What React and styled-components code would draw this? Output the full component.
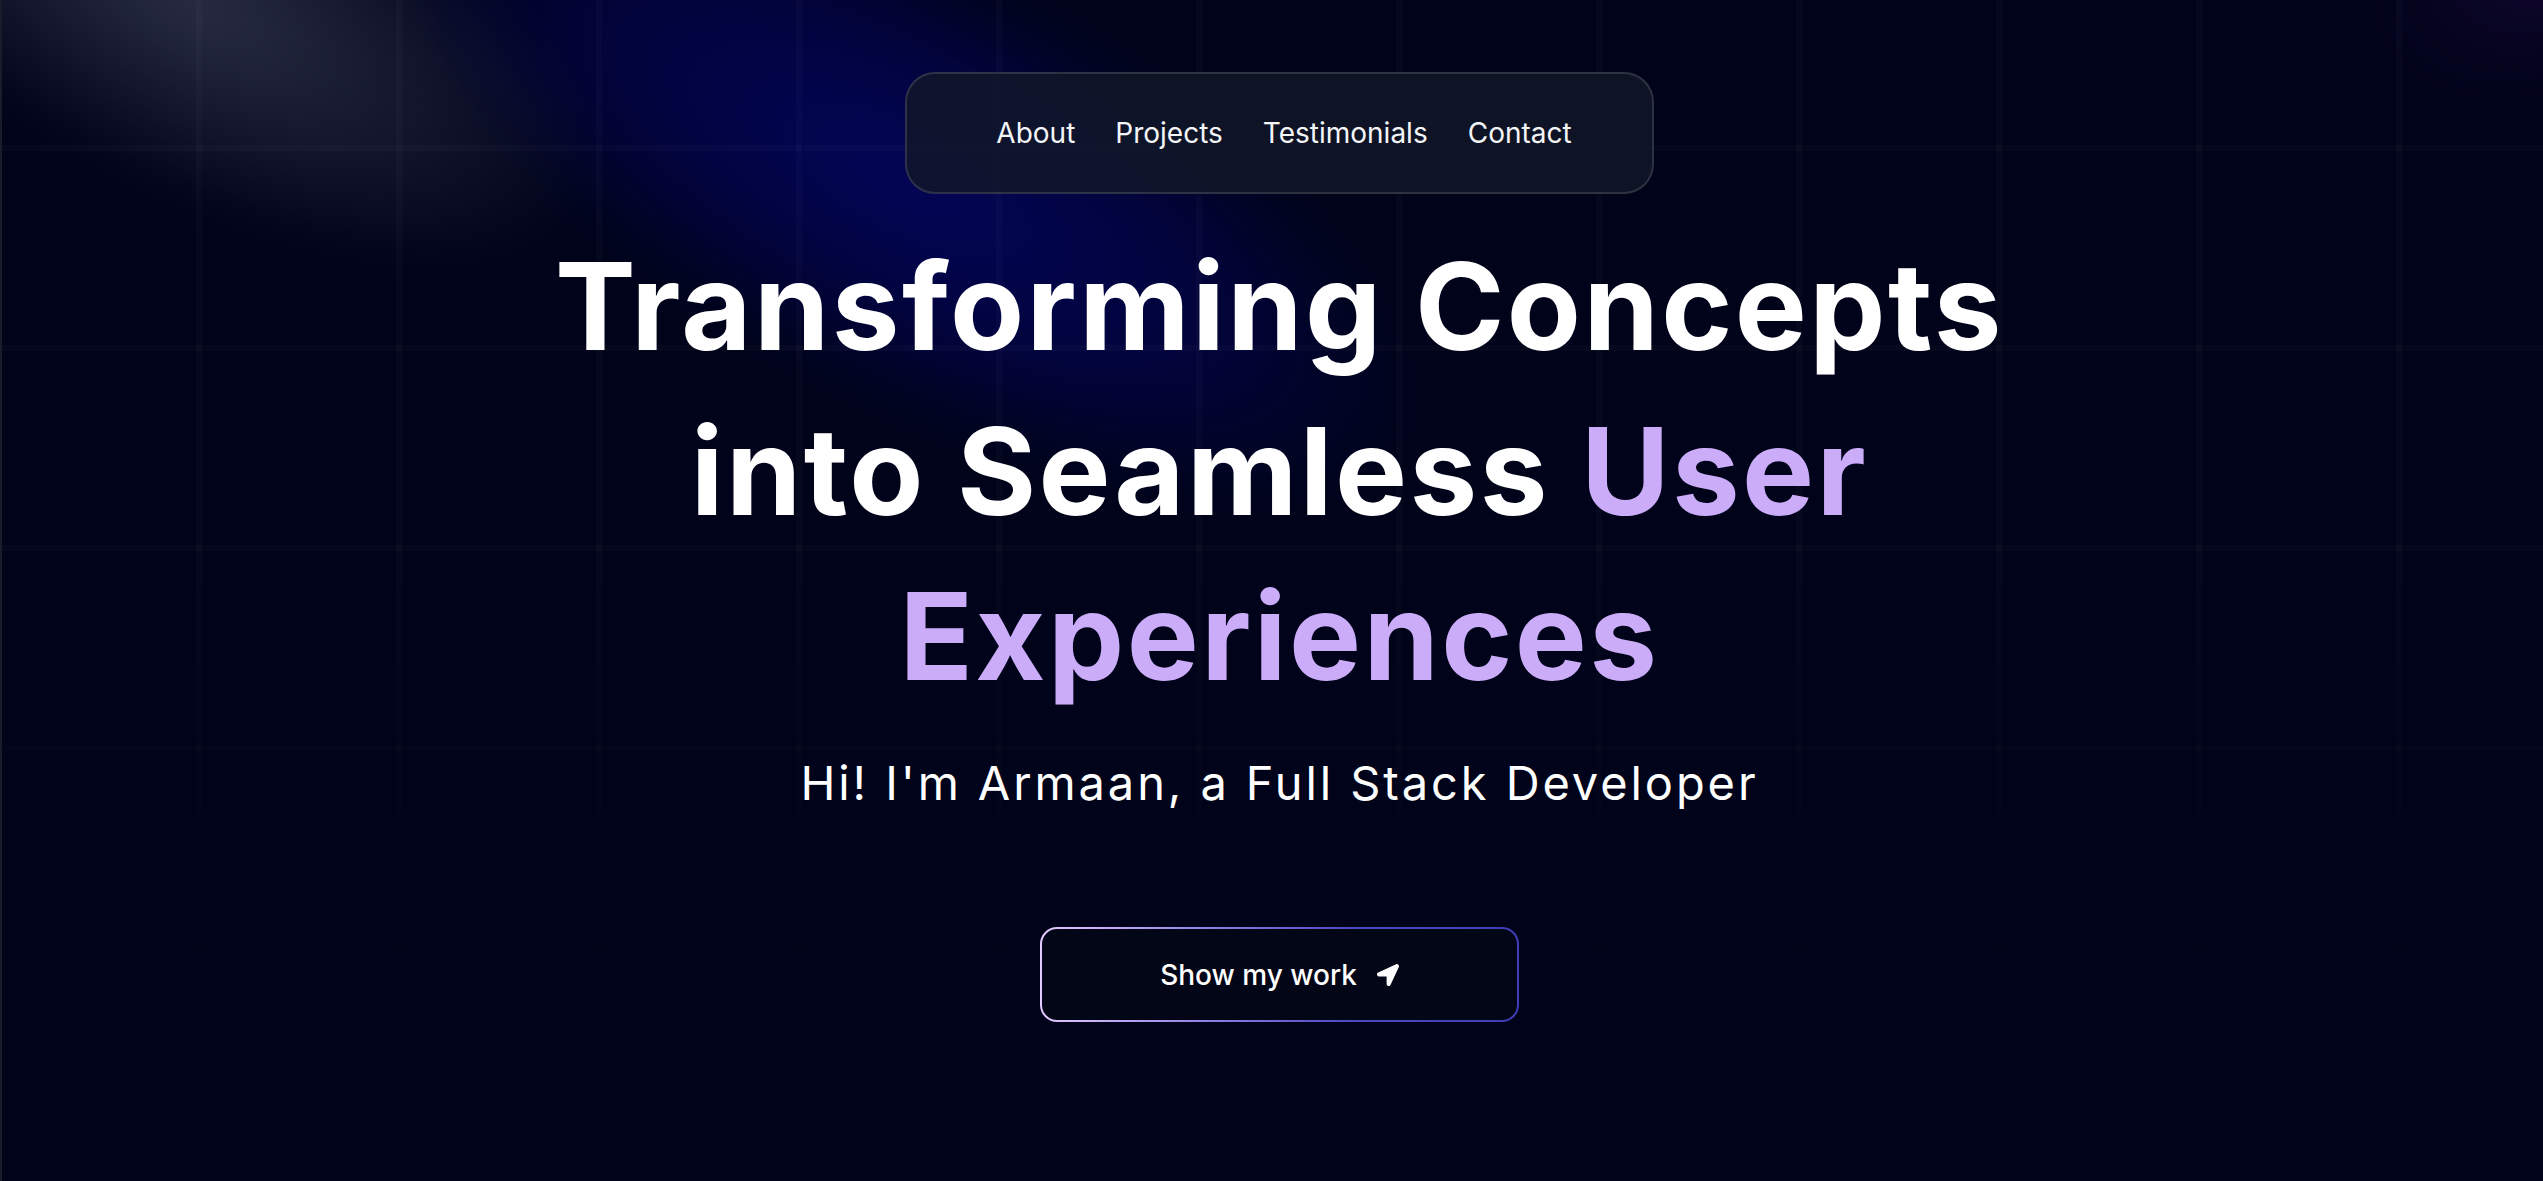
import React from 'react';
import styled, { createGlobalStyle } from 'styled-components';
import { FaLocationArrow } from 'react-icons/fa';

const GlobalStyle = createGlobalStyle`
  * { box-sizing: border-box; }
  html, body {
    margin: 0;
    padding: 0;
    background: #000319;
  }
  body {
    font-family: Inter, "Noto Sans", "Liberation Sans", sans-serif;
    color: #fff;
    -webkit-font-smoothing: antialiased;
  }
`;

const navItems = ['About', 'Projects', 'Testimonials', 'Contact'];

function App() {
  return (
    <>
      <GlobalStyle />
      <Page>
        <Spotlight $kind="white" />
        <Spotlight $kind="blue" />
        <Spotlight $kind="purple" />
        <GridLayer />

        <Hero>
          <Nav>
            {navItems.map((item) => (
              <NavLink key={item} href={`#${item.toLowerCase()}`}>{item}</NavLink>
            ))}
          </Nav>

          <Heading>
            Transforming Concepts
            <br />
            into Seamless <Accent>User</Accent>
            <br />
            <Accent>Experiences</Accent>
          </Heading>

          <Subtitle>Hi! I'm Armaan, a Full Stack Developer</Subtitle>

          <MagicButton href="#projects">
            <ButtonInner>
              Show my work
              <FaLocationArrow />
            </ButtonInner>
          </MagicButton>
        </Hero>
      </Page>
    </>
  );
}

export default App;

const Page = styled.main`
  position: relative;
  min-height: 100vh;
  overflow: hidden;
  background: #000319;
  border-left: 2px solid #1a1c2c;
`;

const spots = {
  white: `
    left: -260px;
    top: -190px;
    width: 900px;
    height: 380px;
    transform: rotate(28deg);
    background: radial-gradient(ellipse at center, rgba(205, 210, 235, 0.2) 0%, rgba(205, 210, 235, 0.1) 35%, transparent 70%);
  `,
  blue: `
    left: 330px;
    top: -40px;
    width: 1150px;
    height: 440px;
    transform: rotate(28deg);
    background: radial-gradient(ellipse at center, rgba(6, 6, 150, 0.5) 0%, rgba(6, 6, 140, 0.3) 40%, transparent 70%);
  `,
  purple: `
    right: -230px;
    top: -200px;
    width: 440px;
    height: 300px;
    transform: rotate(-30deg);
    background: radial-gradient(ellipse at center, rgba(80, 15, 120, 0.25) 0%, rgba(60, 10, 100, 0.08) 45%, transparent 70%);
  `,
};

const Spotlight = styled.div`
  position: absolute;
  pointer-events: none;
  filter: blur(20px);
  ${({ $kind }) => spots[$kind]}
`;

const GridLayer = styled.div`
  position: absolute;
  left: 0;
  top: 0;
  width: 100%;
  height: 1000px;
  pointer-events: none;
  background-image:
    linear-gradient(to right, rgba(255, 255, 255, 0.022) 6px, transparent 6px),
    linear-gradient(to bottom, rgba(255, 255, 255, 0.022) 6px, transparent 6px);
  background-size: 200px 200px;
  background-position: 194px 145px;
  -webkit-mask-image: linear-gradient(to bottom, #000 55%, transparent 100%);
  mask-image: linear-gradient(to bottom, #000 55%, transparent 100%);
`;

const Hero = styled.section`
  position: relative;
  z-index: 1;
  display: flex;
  flex-direction: column;
  align-items: center;
  padding: 72px 0 0 14px;
`;

const Nav = styled.nav`
  display: flex;
  align-items: center;
  gap: 40px;
  height: 122px;
  padding: 0 80px 0 89px;
  border-radius: 30px;
  background: rgba(17, 25, 40, 0.82);
  border: 2px solid rgba(255, 255, 255, 0.13);
`;

const NavLink = styled.a`
  font-size: 28px;
  line-height: 1;
  color: #f4f5f8;
  text-decoration: none;
`;

const Heading = styled.h1`
  margin: 30px 0 0;
  font-size: 121px;
  font-weight: 700;
  line-height: 165px;
  letter-spacing: 0.02em;
  text-align: center;
  color: #fff;
`;

const Accent = styled.span`
  color: #cbacf9;
`;

const Subtitle = styled.p`
  margin: 31px 0 0;
  font-size: 47px;
  line-height: 66px;
  letter-spacing: 2.9px;
  color: #fff;
`;

const MagicButton = styled.a`
  display: block;
  margin-top: 111px;
  width: 479px;
  height: 95px;
  padding: 2px;
  border-radius: 17px;
  background: linear-gradient(90deg, #e2cbff 0%, #8f7fe4 35%, #4b49c4 65%, #3f3db8 100%);
  text-decoration: none;
`;

const ButtonInner = styled.span`
  display: flex;
  align-items: center;
  justify-content: center;
  gap: 20px;
  width: 100%;
  height: 100%;
  border-radius: 15px;
  background: #030616;
  color: #fff;
  font-size: 28px;
  font-weight: 500;

  svg {
    width: 22px;
    height: 22px;
  }
`;
